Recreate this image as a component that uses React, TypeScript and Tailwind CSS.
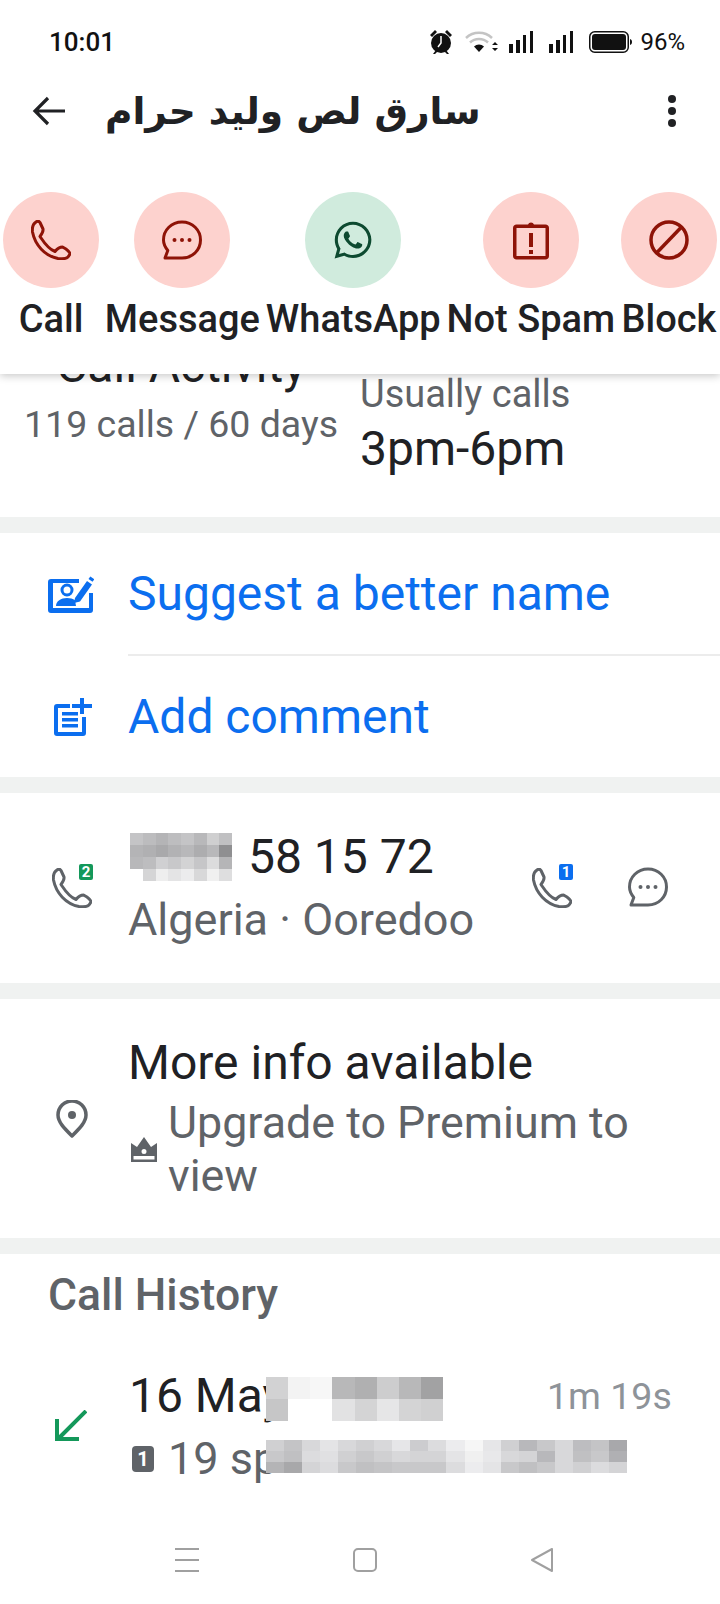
import { FaWhatsapp } from "react-icons/fa";

const num = [
  ["#c4c4c6", "#bcbcbe", "#b4b4b6", "#bdbdbf", "#c4c4c6", "#b8b8ba", "#cfcfd0", "#c0c0c2"],
  ["#b4b4b6", "#b0b0b2", "#a9a9ab", "#b2b2b4", "#b8b8ba", "#adadaf", "#b8b8ba", "#8f8f91"],
  ["#b8b8ba", "#bdbdbf", "#d0d0d2", "#c8c8ca", "#d3d3d4", "#c6c6c8", "#dcdcdd", "#b5b5b7"],
  ["#ffffff", "#d5d5d6", "#eeeeee", "#e4e4e5", "#ececed", "#d8d8d9", "#f0f0f0", "#dededf"],
];

const dateBlur = [
  ["#d2d2d3", "#f3f3f3", "#f7f7f7", "#b8b8b9", "#b0b0b1", "#cdcdce", "#b8b8b9", "#a2a2a3"],
  ["#c6c6c7", "#ffffff", "#ffffff", "#e2e2e3", "#d4d4d5", "#e6e6e7", "#d4d4d5", "#d0d0d1"],
];

const subBlur = [
  ["#d0d0d2", "#c4c4c6", "#d8d8da", "#e4e4e6", "#d8d8da", "#d0d0d2", "#d8d8da", "#e6e6e8", "#cccccf", "#dcdcde", "#ececee", "#f6f6f6", "#e6e6e8", "#d0d0d2", "#b8b8bb", "#c8c8ca", "#d8d8da", "#bdbdc0", "#c4c4c6", "#a8a8ab"],
  ["#c8c8ca", "#c0c0c2", "#dcdcde", "#e0e0e2", "#d0d0d2", "#c8c8ca", "#d0d0d2", "#d8d8da", "#d4d4d6", "#d4d4d6", "#e4e4e6", "#f0f0f0", "#e8e8ea", "#d8d8da", "#d4d4d6", "#b8b8bb", "#d8d8da", "#c0c0c2", "#c8c8ca", "#b0b0b3"],
  ["#b4b4b6", "#a8a8aa", "#d4d4d6", "#dcdcde", "#c8c8ca", "#c0c0c2", "#c4c4c6", "#c8c8ca", "#c8c8ca", "#c8c8ca", "#dcdcde", "#ececee", "#e4e4e6", "#c8c8ca", "#c0c0c2", "#c8c8ca", "#d8d8da", "#d0d0d2", "#dcdcde", "#d4d4d6"],
];

function Mosaic({ rows, className }: { rows: string[][]; className: string }) {
  return (
    <div className={className} style={{ display: "grid", gridTemplateColumns: `repeat(${rows[0].length}, 1fr)` }}>
      {rows.flat().map((c, i) => (
        <div key={i} style={{ backgroundColor: c }} />
      ))}
    </div>
  );
}

function PhoneIcon({ className }: { className: string }) {
  return (
    <svg viewBox="0 0 40 40" fill="none" stroke="currentColor" strokeWidth="3" strokeLinejoin="round" className={className}>
      <path d="M5 2C2 4 1 8 1.500 12 4 25 14 36 27 38.500c4 .5 8 .5 10-1.500l2-3c0-2-2-3-4-5l-3.500-2c-2.500 0-5.500 2-7.500 4.500C17 29 12 21 9 16.500c2-2.500 3.500-4.500 3-7.500L9 2.500C8 1 6.500 1 5 2Z" />
    </svg>
  );
}

function MessageIcon({ className }: { className: string }) {
  return (
    <svg viewBox="0 0 40 40" fill="none" stroke="currentColor" className={className}>
      <path strokeWidth="3" strokeLinejoin="round" d="M20 2c10.500 0 18.500 8 18.500 18S30.500 38 20 38H3l2.800-7.500C3 27 1.500 24 1.500 20 1.500 10 9.500 2 20 2Z" />
      <g fill="currentColor" stroke="none">
        <circle cx="12.500" cy="20" r="2" />
        <circle cx="20" cy="20" r="2" />
        <circle cx="27.500" cy="20" r="2" />
      </g>
    </svg>
  );
}

function ReportIcon({ className }: { className: string }) {
  return (
    <svg viewBox="0 0 36 40" fill="currentColor" className={className}>
      <path fillRule="evenodd" d="M15 4.500a3.200 3.200 0 0 1 6 0h11.500C34.500 4.500 36 6 36 8v28c0 2-1.500 3.500-3.500 3.500h-29C1.500 39.500 0 38 0 36V8c0-2 1.500-3.500 3.500-3.500H15ZM3.500 8v28h29V8h-29Z" />
      <rect x="16" y="13" width="4" height="14" />
      <rect x="16" y="30" width="4" height="4" />
    </svg>
  );
}

function BlockIcon({ className }: { className: string }) {
  return (
    <svg viewBox="0 0 40 40" fill="none" stroke="currentColor" strokeWidth="3.500" className={className}>
      <circle cx="20" cy="20" r="18" />
      <path d="M7.500 33 32.500 7" />
    </svg>
  );
}

function Action({ label, bg, children }: { label: string; bg: string; children: React.ReactNode }) {
  return (
    <div className="flex flex-col items-center">
      <div className={`flex h-[96px] w-[96px] items-center justify-center rounded-full ${bg}`}>{children}</div>
      <span className="mt-[9px] whitespace-nowrap text-[38px] leading-[44px] font-medium text-[#202124]">{label}</span>
    </div>
  );
}

export default function App() {
  return (
    <div className="flex h-[1604px] w-[720px] flex-col overflow-hidden bg-white font-['Roboto',sans-serif]">
      <header className="relative z-10 h-[374px] shrink-0 bg-white shadow-[0_2px_8px_rgba(0,0,0,0.22)]">
        {/* status bar */}
        <div className="flex h-[84px] items-center justify-between pr-[35px] pl-[49px] text-[#111]">
          <span className="text-[26px] font-medium">10:01</span>
          <div className="flex items-center">
            <svg viewBox="0 0 24 26" fill="currentColor" className="h-[26px] w-[24px]">
              <circle cx="12" cy="14" r="10" />
              <path d="M1 6l5-5 2 2-5 5zM23 6l-5-5-2 2 5 5zM4 25l3-4 2 1-3 3zM20 25l-3-4-2 1 3 3z" />
              <path d="M12 7v7l-3 4" fill="none" stroke="#fff" strokeWidth="1.500" />
            </svg>
            <svg viewBox="0 0 34 24" className="ml-[12px] h-[24px] w-[34px]">
              <path d="M1 8a19 19 0 0 1 26 0M5 12.500a13 13 0 0 1 18 0" fill="none" stroke="#c4c4c4" strokeWidth="2.500" />
              <path d="M9 16.500a7.500 7.500 0 0 1 10 0L14 22Z" fill="#111" />
              <path d="M27 15l3-3 3 3ZM27 18l3 3 3-3Z" fill="#111" />
            </svg>
            <svg viewBox="0 0 26 24" fill="currentColor" className="ml-[10px] h-[24px] w-[26px]">
              <rect x="0" y="14" width="4" height="9" />
              <rect x="7" y="10" width="4" height="13" />
              <rect x="14" y="5" width="3" height="18" />
              <rect x="21" y="1" width="3" height="22" />
            </svg>
            <svg viewBox="0 0 26 24" fill="currentColor" className="ml-[14px] h-[24px] w-[26px]">
              <rect x="0" y="14" width="4" height="9" />
              <rect x="7" y="10" width="4" height="13" />
              <rect x="14" y="5" width="3" height="18" />
              <rect x="21" y="1" width="3" height="22" />
            </svg>
            <svg viewBox="0 0 43 22" className="ml-[14px] h-[22px] w-[43px]">
              <rect x="0.750" y="0.750" width="38.500" height="20.500" rx="5" fill="none" stroke="#111" strokeWidth="1.500" />
              <rect x="3" y="3" width="34" height="16" rx="3" fill="#111" />
              <path d="M41 8c1.300.4 2 1.500 2 3s-.7 2.600-2 3Z" fill="#111" />
            </svg>
            <span className="ml-[8px] text-[24px] font-normal">96%</span>
          </div>
        </div>

        {/* title row */}
        <div className="flex h-[54px] items-center justify-between pr-[44px] pl-[32px] text-[#202124]">
          <div className="flex items-center">
            <svg viewBox="0 0 34 30" fill="none" stroke="currentColor" strokeWidth="3.200" className="h-[30px] w-[34px]">
              <path d="M33 15H3M16 2 3 15l13 13" />
            </svg>
            <span dir="rtl" className="ml-[39px] font-['DejaVu_Sans',sans-serif] text-[37.500px] leading-[54px] font-bold">
              سارق لص وليد حرام
            </span>
          </div>
          <div className="flex flex-col gap-[4px]">
            <span className="h-[8px] w-[8px] rounded-full bg-[#202124]" />
            <span className="h-[8px] w-[8px] rounded-full bg-[#202124]" />
            <span className="h-[8px] w-[8px] rounded-full bg-[#202124]" />
          </div>
        </div>

        {/* actions */}
        <div className="mt-[54px] flex justify-between pr-[3px] pl-[3px]">
          <Action label="Call" bg="bg-[#fdd2ce]">
            <PhoneIcon className="h-[40px] w-[40px] text-[#8e1307]" />
          </Action>
          <Action label="Message" bg="bg-[#fdd2ce]">
            <MessageIcon className="h-[40px] w-[40px] text-[#8e1307]" />
          </Action>
          <Action label="WhatsApp" bg="bg-[#d0ebdd]">
            <FaWhatsapp className="h-[42px] w-[42px] text-[#0d4a30]" />
          </Action>
          <Action label="Not Spam" bg="bg-[#fdd2ce]">
            <ReportIcon className="h-[40px] w-[36px] text-[#8e1307]" />
          </Action>
          <Action label="Block" bg="bg-[#fdd2ce]">
            <BlockIcon className="h-[40px] w-[40px] text-[#8e1307]" />
          </Action>
        </div>
      </header>

      {/* call activity, scrolled under the header */}
      <section className="flex h-[143px] shrink-0 overflow-hidden border-b-[16px] border-[#f0f2f1] box-content">
        <div className="w-[360px] pl-[24px]">
          <div className="-mt-[36px] w-[314px] text-center text-[48px] leading-[56px] text-[#202124]">Call Activity</div>
          <div className="mt-[8px] w-[314px] text-center whitespace-nowrap text-[37.500px] leading-[44px] text-[#5f6368]">119 calls / 60 days</div>
        </div>
        <div>
          <div className="text-[38px] leading-[40px] text-[#5f6368]">Usually calls</div>
          <div className="mt-[7px] text-[48px] leading-[56px] text-[#202124]">3pm-6pm</div>
        </div>
      </section>

      <section className="shrink-0 border-b-[16px] border-[#f0f2f1] text-[#0b6eef]">
        <div className="flex h-[121px] items-center">
          <svg viewBox="0 0 46 38" fill="currentColor" className="ml-[48px] h-[38px] w-[46px]">
            <path d="M3 4h28v4H5v25h36V18h4v17a3 3 0 0 1-3 3H3a3 3 0 0 1-3-3V7a3 3 0 0 1 3-3Z" />
            <circle cx="19" cy="15" r="5" fill="none" stroke="currentColor" strokeWidth="3" />
            <path d="M8 31c0-5 5-8 11-8 3 0 6 .8 8 2.200L28 31Z" />
            <path d="M27 23 39 6l5 3.500L32 26.500l-6 1.500ZM40.500 4l1.800-2.500 4 2.800-1.800 2.500Z" />
          </svg>
          <span className="ml-[34px] text-[48px] leading-[56px]">Suggest a better name</span>
        </div>
        <div className="ml-[128px] h-[2px] bg-[#ececec]" />
        <div className="flex h-[121px] items-center">
          <svg viewBox="0 0 38 38" fill="currentColor" className="ml-[54px] h-[38px] w-[38px]">
            <path d="M3 6h13v4H4v24h24V19h4v16a3 3 0 0 1-3 3H3a3 3 0 0 1-3-3V9a3 3 0 0 1 3-3Z" />
            <rect x="8" y="14" width="16" height="3.500" />
            <rect x="8" y="20" width="16" height="3.500" />
            <rect x="8" y="26" width="16" height="3.500" />
            <path d="M26 0h4v6h8v4h-8v6h-4v-6h-8V6h8Z" />
          </svg>
          <span className="ml-[36px] text-[48px] leading-[56px]">Add comment</span>
        </div>
      </section>

      <section className="flex h-[206px] shrink-0 items-center border-b-[16px] border-[#f0f2f1] pb-[2px]">
        <div className="relative ml-[52px] h-[42px] w-[40px] text-[#5f6368]">
          <PhoneIcon className="absolute top-[2px] left-0 h-[40px] w-[40px]" />
          <span className="absolute -top-[2px] right-[-1px] flex h-[16px] w-[14px] items-center justify-center rounded-[2px] bg-[#14985a] text-[15px] leading-none font-bold text-white">2</span>
        </div>
        <div className="ml-[36px]">
          <div className="flex h-[65px] items-center">
            <Mosaic rows={num} className="ml-[2px] h-[48px] w-[102px]" />
            <span className="ml-[16px] text-[48px] leading-[56px] text-[#202124]">58 15 72</span>
          </div>
          <div className="text-[45px] leading-[60px] text-[#5f6368]">Algeria · Ooredoo</div>
        </div>
        <div className="relative ml-auto h-[42px] w-[40px] text-[#5f6368]">
          <PhoneIcon className="absolute top-[2px] left-0 h-[40px] w-[40px]" />
          <span className="absolute -top-[2px] right-[-1px] flex h-[16px] w-[14px] items-center justify-center rounded-[2px] bg-[#0b6eef] text-[15px] leading-none font-bold text-white">1</span>
        </div>
        <MessageIcon className="mr-[52px] ml-[56px] h-[40px] w-[40px] text-[#5f6368]" />
      </section>

      <section className="flex h-[239px] shrink-0 box-content items-center border-b-[16px] border-[#f0f2f1] text-[#5f6368]">
        <svg viewBox="0 0 32 38" className="ml-[56px] h-[38px] w-[32px] shrink-0">
          <path d="M16 36C8 28 2 22 2 15a14 14 0 0 1 28 0c0 7-6 13-14 21Z" fill="none" stroke="currentColor" strokeWidth="3.500" strokeLinejoin="round" />
          <circle cx="16" cy="15" r="4" fill="currentColor" />
        </svg>
        <div className="ml-[40px]">
          <div className="text-[48px] leading-[56px] text-[#202124]">More info available</div>
          <div className="mt-[5px] flex items-center">
            <svg viewBox="0 0 26 25" fill="currentColor" className="ml-[3px] h-[25px] w-[26px] shrink-0">
              <path fillRule="evenodd" d="M0 6l6 4 7-10 7 10 6-4v19H0Zm13 11a2.500 2.500 0 1 0 0-5 2.500 2.500 0 0 0 0 5ZM2.500 19v3.500h21V19Z" />
            </svg>
            <div className="ml-[11px] w-[480px] text-[44.800px] leading-[53px]">Upgrade to Premium to view</div>
          </div>
        </div>
      </section>

      <section className="relative min-h-0 flex-1 overflow-hidden">
        <div className="mt-[17px] ml-[48px] text-[44.500px] leading-[48px] font-medium text-[#5f6368]">Call History</div>
        <div className="relative mt-[49px] flex">
          <svg viewBox="0 0 32 32" fill="none" stroke="#14985a" strokeWidth="4" className="absolute top-[42px] left-[55px] h-[32px] w-[32px]">
            <path d="M31 1 3 29M2 9v20h22" />
          </svg>
          <div className="ml-[129px]">
            <div className="text-[48px] leading-[56px] text-[#202124]">16 May</div>
            <div className="relative mt-[9px] flex items-center">
              <span className="ml-[3px] flex h-[26px] w-[22px] items-center justify-center rounded-[4px] bg-[#5f6368] text-[20px] leading-none font-bold text-white">1</span>
              <span className="ml-[14px] text-[45px] leading-[52px] text-[#5f6368]">19 sp</span>
            </div>
          </div>
          <span className="absolute top-[4px] left-[547px] text-[37.500px] leading-[48px] text-[#8e9399]">1m 19s</span>
        </div>
        <Mosaic rows={dateBlur} className="absolute top-[123px] left-[266px] h-[44px] w-[177px]" />
        <Mosaic rows={subBlur} className="absolute top-[186px] left-[266px] h-[33px] w-[361px]" />
      </section>

      <nav className="flex h-[88px] shrink-0 items-center text-[#a0a0a0]">
        <svg viewBox="0 0 24 24" fill="none" stroke="currentColor" strokeWidth="2" className="ml-[175px] h-[24px] w-[24px]">
          <path d="M0 1h24M0 12h24M0 23h24" />
        </svg>
        <svg viewBox="0 0 24 24" fill="none" stroke="currentColor" strokeWidth="2" className="ml-[154px] h-[24px] w-[24px]">
          <rect x="1" y="1" width="22" height="22" rx="4" />
        </svg>
        <svg viewBox="0 0 24 24" fill="none" stroke="currentColor" strokeWidth="2" strokeLinejoin="round" className="ml-[153px] h-[24px] w-[24px]">
          <path d="M22 1v22L2 12Z" />
        </svg>
      </nav>
    </div>
  );
}
